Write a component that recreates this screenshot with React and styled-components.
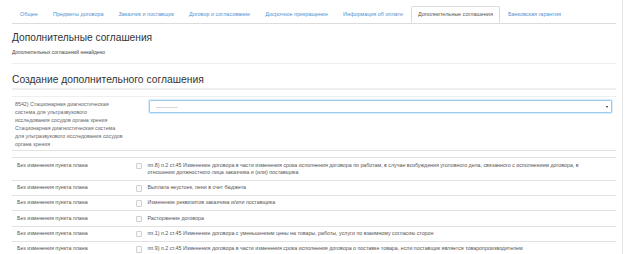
import React from 'react';
import styled, { createGlobalStyle } from 'styled-components';

const GlobalStyle = createGlobalStyle`
  html, body {
    margin: 0;
    padding: 0;
    background: #fff;
  }
  body {
    font-family: "Liberation Sans", Arial, sans-serif;
    color: #555;
  }
`;

const tabs = [
  'Общее',
  'Предметы договора',
  'Заказчик и поставщик',
  'Договор и согласование',
  'Досрочное прекращение',
  'Информация об оплате',
  'Дополнительные соглашения',
  'Банковская гарантия',
];

const labelLines = [
  '8542) Стационарная диагностическая',
  'система для ультразвукового',
  'исследования сосудов органа зрения',
  'Стационарная диагностическая система',
  'для ультразвукового исследования сосудов',
  'органа зрения',
];

const rows = [
  'пп.8) п.2 ст.45 Изменение договора в части изменения срока исполнения договора по работам, в случае возбуждения уголовного дела, связанного с исполнением договора, в отношении должностного лица заказчика и (или) поставщика',
  'Выплата неустоек, пени в счет бюджета',
  'Изменение реквизитов заказчика и/или поставщика',
  'Расторжение договора',
  'пп.1) п.2 ст.45 Изменение договора с уменьшением цены на товары, работы, услуги по взаимному согласию сторон',
  'пп.9) п.2 ст.45 Изменения договора в части изменения срока исполнения договора о поставке товара, если поставщик является товаропроизводителем',
];

function App() {
  return (
    <Page>
      <GlobalStyle />
      <Main>
        <Tabs>
          {tabs.map((t) => (
            <Tab key={t} $active={t === 'Дополнительные соглашения'}>{t}</Tab>
          ))}
        </Tabs>

        <Title>Дополнительные соглашения</Title>
        <Note>Дополнительных соглашений ненайдено</Note>
        <Rule />

        <Subtitle>Создание дополнительного соглашения</Subtitle>
        <ThickRule />

        <FormRow>
          <Label>
            {labelLines.map((l) => (
              <LabelLine key={l}>{l}</LabelLine>
            ))}
          </Label>
          <Select>
            <span>------------</span>
            <Caret />
          </Select>
        </FormRow>

        <List>
          {rows.map((r, i) => (
            <Row key={i}>
              <Plan>Без изменения пункта плана</Plan>
              <CheckCell><Check /></CheckCell>
              <Reason>{r}</Reason>
            </Row>
          ))}
        </List>
      </Main>
    </Page>
  );
}

const Page = styled.div`
  width: 628px;
  height: 254px;
  overflow: hidden;
  display: flex;
`;

const Main = styled.div`
  width: 604px;
  padding: 6px 6px 0 12px;
  border-right: 1px solid #e6e6e6;
`;

const Tabs = styled.div`
  display: flex;
  border-bottom: 1px solid #dcdcdc;
  height: 17px;
  padding-left: 1px;
`;

const Tab = styled.div`
  font-size: 5.45px;
  line-height: 15px;
  padding: 0 6.1px;
  margin-right: 0.9px;
  border: 1px solid ${(p) => (p.$active ? '#dcdcdc' : 'transparent')};
  border-bottom-color: ${(p) => (p.$active ? '#fff' : 'transparent')};
  border-radius: 2px 2px 0 0;
  background: #fff;
  color: ${(p) => (p.$active ? '#555' : '#5592d2')};
  white-space: nowrap;
`;

const Title = styled.h2`
  margin: 6.5px 0 0;
  font-size: 10.2px;
  line-height: 13px;
  font-weight: normal;
  color: #333;
`;

const Note = styled.div`
  margin-top: 5.5px;
  font-size: 4.9px;
  line-height: 7px;
  color: #444;
`;

const Rule = styled.div`
  margin-top: 7px;
  border-top: 1px solid #eee;
`;

const Subtitle = styled.h3`
  margin: 8.5px 0 0;
  font-size: 10.3px;
  line-height: 13px;
  font-weight: normal;
  color: #333;
`;

const ThickRule = styled.div`
  margin-top: 2.5px;
  border-top: 2px solid #eee;
`;

const FormRow = styled.div`
  margin-top: 5.7px;
  border-top: 1px solid #eee;
  border-bottom: 1px solid #e2e2e2;
  display: flex;
  align-items: flex-start;
  padding: 3.4px 0 2.4px;
`;

const Label = styled.div`
  width: 133.7px;
  padding-left: 3px;
  flex: none;
  font-size: 5.3px;
  line-height: 8px;
  color: #666;
`;

const LabelLine = styled.div`
  white-space: nowrap;
`;

const Select = styled.div`
  flex: 1;
  margin: -0.4px 3.7px 0 0;
  height: 11.7px;
  border: 1px solid #9ccbf0;
  box-shadow: 0 0 1px 1px #d8ebfa;
  border-radius: 1px;
  display: flex;
  align-items: center;
  justify-content: space-between;
  padding: 0 3px 0 6px;
  font-size: 5.5px;
  color: #888;
`;

const Caret = styled.span`
  width: 0;
  height: 0;
  border-left: 1.8px solid transparent;
  border-right: 1.8px solid transparent;
  border-top: 2.6px solid #222;
`;

const List = styled.div`
  margin-top: 6px;
  border-top: 1px solid #e2e2e2;
`;

const Row = styled.div`
  display: flex;
  align-items: flex-start;
  border-bottom: 1px solid #e2e2e2;
  padding: 3.2px 0 3.6px;
  font-size: 5.3px;
  line-height: 7.3px;
  color: #555;
`;

const Plan = styled.div`
  width: 118px;
  padding-left: 5px;
  flex: none;
`;

const CheckCell = styled.div`
  width: 12px;
  padding-left: 0.5px;
  flex: none;
  display: flex;
  padding-top: 1px;
`;

const Check = styled.span`
  width: 4.5px;
  height: 4.5px;
  border: 1px solid #d0d0d0;
  border-radius: 1px;
  background: #fafafa;
`;

const Reason = styled.div`
  flex: 1;
  padding-right: 10px;
`;

export default App;
